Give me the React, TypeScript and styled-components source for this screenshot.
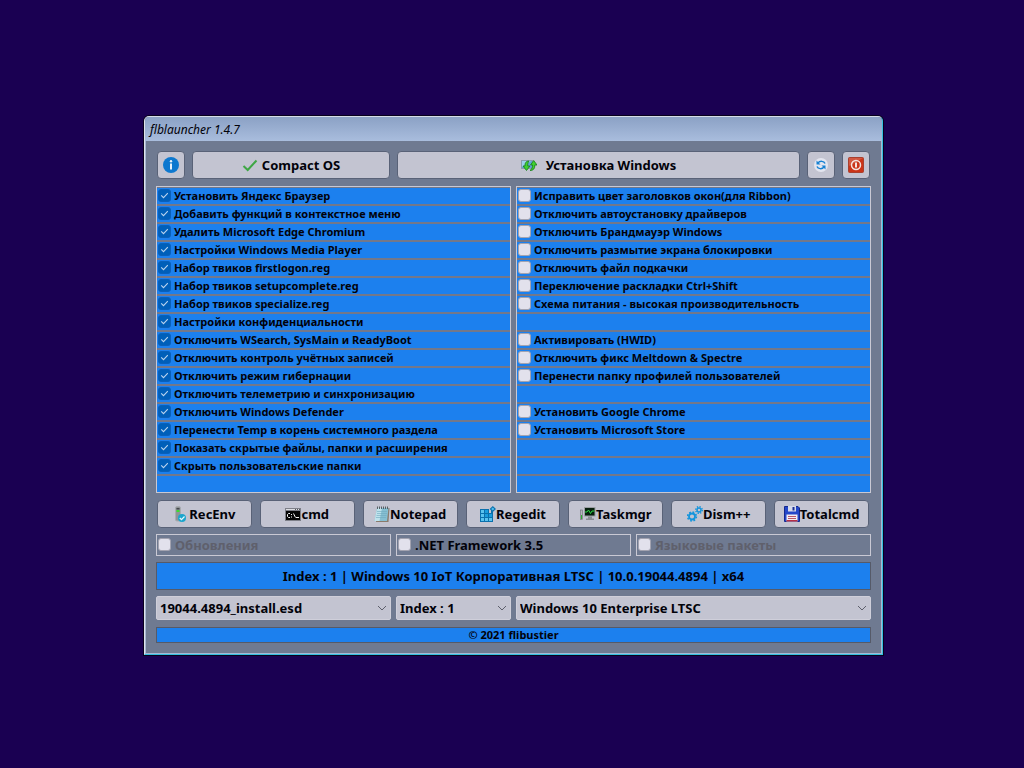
import React from "react";
import styled, { createGlobalStyle } from "styled-components";

const color = {
  desktop: "#1a0052",
  panel: "#6f7a91",
  face: "#c3c4d1",
  blue: "#1c80ee",
  edge: "#c9c9d4",
  dark: "#565a68",
  text: "#02020a",
};

const GlobalStyle = createGlobalStyle`
  *, *::before, *::after { box-sizing: border-box; }
  body {
    margin: 0;
    background: ${color.desktop};
    color: ${color.text};
    font: bold 13px/16px "Noto Sans", "DejaVu Sans", sans-serif;
  }
  button, select, input { font: inherit; color: inherit; margin: 0; }
`;

const Desktop = styled.div`
  display: flex;
  align-items: center;
  justify-content: center;
  min-height: 100vh;
  padding: 19px 16px 16px 19px;
`;

const Window = styled.main`
  width: 100%;
  max-width: 739px;
  background: ${color.panel};
  border: 1px solid;
  border-color: #d5dce6 #35bfe0 #35bfe0 #dfe3ea;
  border-radius: 5px 5px 0 0;
  box-shadow: 0 0 0 1px #08001e;
  overflow: hidden;
`;

const TitleBar = styled.header`
  height: 24px;
  padding: 0 5px;
  background: linear-gradient(#8ba1c5, #a9bddd);
`;

const Title = styled.h1`
  margin: 0;
  font: italic 400 12px/25px "Noto Sans", sans-serif;
`;

const Body = styled.div`
  display: flex;
  flex-direction: column;
  gap: 6px;
  padding: 10px;
  border: solid #a6b8d3;
  border-width: 0 1px 1px;
`;

const Toolbar = styled.div`
  display: grid;
  grid-template-columns: 28px 198fr 403fr 28px 28px;
  gap: 7px;
  padding: 0 1px 1px;
`;

const Launchers = styled.div`
  display: grid;
  grid-template-columns: repeat(7, 1fr);
  gap: 8px;
  padding: 1px 2px 0 1px;
`;

const Button = styled.button<{ $gap?: number }>`
  display: flex;
  align-items: center;
  justify-content: center;
  gap: ${(p) => p.$gap ?? 0}px;
  height: 28px;
  padding: 0;
  border: 1px solid #596277;
  border-radius: 4px;
  background: ${color.face};
  white-space: nowrap;
  svg { flex: none; }
`;

const Lists = styled.div`
  display: grid;
  grid-template-columns: 1fr 1fr;
  gap: 5px;
`;

const List = styled.ul`
  display: flex;
  flex-direction: column;
  gap: 2px;
  margin: 0;
  padding: 1px 0 0;
  list-style: none;
  border: 1px solid ${color.edge};
  background: #73788a;
`;

const Row = styled.li`
  height: 16px;
  background: ${color.blue};
`;

const Label = styled.label`
  display: flex;
  align-items: center;
  gap: 3px;
  height: 15px;
  padding-left: 1px;
  font-size: 11px;
  line-height: 15px;
  white-space: nowrap;
`;

const Check = styled.input`
  appearance: none;
  flex: none;
  width: 13px;
  height: 13px;
  border: 1px solid #a3a3b0;
  border-radius: 3px;
  background: #e2e1ec;
  &:checked {
    border-color: #0a60ba;
    background: #005fb9 url("data:image/svg+xml,%3Csvg xmlns='http://www.w3.org/2000/svg' viewBox='0 0 11 11'%3E%3Cpath d='M2.2 5.3l2.3 2.3 4.3-4.4' fill='none' stroke='%23b9d3ee' stroke-width='1.1'/%3E%3C/svg%3E") center / 11px 11px;
  }
`;

const Extras = styled.div`
  display: grid;
  grid-template-columns: repeat(3, 1fr);
  gap: 5px;
`;

const Extra = styled.label<{ $off?: boolean }>`
  display: flex;
  align-items: center;
  gap: 4px;
  height: 22px;
  padding: 0 0 1px 1px;
  border: 1px solid ${color.edge};
  color: ${(p) => (p.$off ? "#5f606c" : color.text)};
`;

const Banner = styled.div<{ $small?: boolean }>`
  display: flex;
  align-items: center;
  justify-content: center;
  height: ${(p) => (p.$small ? 16 : 28)}px;
  margin-top: ${(p) => (p.$small ? 1 : 0)}px;
  border: 1px solid ${color.dark};
  background: ${color.blue};
  font-size: ${(p) => (p.$small ? 11 : 13)}px;
`;

const Selects = styled.div`
  display: grid;
  grid-template-columns: 235fr 115fr 355fr;
  gap: 5px;
`;

const SelectBox = styled.div`
  position: relative;
  svg {
    position: absolute;
    right: 4px;
    top: 8px;
    pointer-events: none;
  }
`;

const Select = styled.select`
  display: block;
  appearance: none;
  width: 100%;
  height: 24px;
  padding: 0 20px 0 3px;
  border: 1px solid #cfcfda;
  border-radius: 2px;
  background: ${color.face};
`;

const Svg = ({ children }: { children: React.ReactNode }) => (
  <svg width="16" height="16" viewBox="0 0 16 16" aria-hidden="true">
    {children}
  </svg>
);

const InfoIcon = () => (
  <Svg>
    <circle cx="8" cy="8" r="8" fill="#0d78cf" />
    <rect x="7" y="6.5" width="2" height="6" fill="#e8f1fa" />
    <circle cx="8" cy="4.2" r="1.2" fill="#e8f1fa" />
  </Svg>
);

const TickIcon = () => (
  <Svg>
    <path d="M1.5 9l4.2 4L14.5 3.5" fill="none" stroke="#3fa745" strokeWidth="2" />
  </Svg>
);

const InstallIcon = () => (
  <Svg>
    <rect x="0.5" y="3.5" width="11" height="8" fill="#5fa6d6" stroke="#8b9cae" />
    <path d="M1 4h9L1 10z" fill="#9fd0ee" />
    <path d="M8 4C5 4 3.700 6 4 9H2l3.500 4.500L9 9H6.800C6.500 7 7 5.500 8 4z" fill="#3fd030" stroke="#177c1a" strokeWidth=".8" />
    <path d="M9 13.500c3.500 0 5-2 4.800-5.500H16l-3.300-4.500L9.500 8h2c.2 2.500-.7 4-2.500 5.500z" fill="#3fd030" stroke="#177c1a" strokeWidth=".8" />
  </Svg>
);

const RefreshIcon = () => (
  <Svg>
    <circle cx="8" cy="8" r="7" fill="#e3e5ef" />
    <path d="M12 6.500C11 4 7 3.500 5 6M4 9.500c1 2.500 5 3 7 .5" fill="none" stroke="#1681d2" strokeWidth="1.500" />
    <path d="M3.500 3.500v4h4zM12.500 12.500v-4h-4z" fill="#1681d2" />
  </Svg>
);

const PowerIcon = () => (
  <Svg>
    <rect x="0.500" y="0.500" width="15" height="15" rx="1" fill="#cb3418" stroke="#a8402f" />
    <path d="M1 1h14L1 9z" fill="#d9705c" opacity=".6" />
    <circle cx="8" cy="8" r="4.500" fill="none" stroke="#f3e2de" strokeWidth="1.500" />
    <rect x="7" y="5.500" width="2" height="5" fill="#f3e2de" />
  </Svg>
);

const RecEnvIcon = () => (
  <Svg>
    <rect x="2.500" y="0.500" width="5" height="14.500" rx="1.500" fill="#8f9497" stroke="#a8acb0" />
    <rect x="3.500" y="2" width="3" height="1.500" fill="#45494c" />
    <rect x="3.500" y="4" width="3" height="2" fill="#3ddc2f" />
    <circle cx="9" cy="12" r="4" fill="#1ba5cc" />
    <path d="M6.800 12l1.700 1.700 3-3.200" fill="none" stroke="#e8f8fc" strokeWidth="1.200" />
  </Svg>
);

const CmdIcon = () => (
  <Svg>
    <rect x="0" y="2" width="16" height="13" fill="#7d7f88" />
    <rect x="1" y="3" width="14" height="1" fill="#dcdde2" />
    <path d="M10 3.500h1M12 3.500h1M14 3.500h1" stroke="#55575f" />
    <rect x="1" y="5" width="14" height="9" fill="#050505" />
    <path d="M5 7.500H3.500L2.500 8.500v2l1 1H5M6.500 8v1M6.500 10.500v1M8.500 7.500l2 4M11 11.500h3" fill="none" stroke="#f2f2f2" />
  </Svg>
);

const NotepadIcon = () => (
  <Svg>
    <path d="M3 2h12.500l-1 14H2z" fill="#8a7b6c" />
    <path d="M3 2h11.500l-1.500 13H0.500z" fill="#86bfd2" />
    <path d="M3 2h5L5.500 15h-5z" fill="#bfe2ec" />
    <path d="M3 5.500h10M3 7.500h10M2.500 9.500h10M2 11.500h10" stroke="#6faabd" strokeWidth=".6" />
    <path d="M3.500 0.500v2.500M5.500 0.500v2.500M7.500 0.500v2.500M9.500 0.500v2.500M11.500 0.500v2.500M13.500 0.500v2.500" stroke="#4b5559" strokeWidth=".9" />
  </Svg>
);

const RegeditIcon = () => (
  <Svg>
    <rect x="0" y="3" width="13" height="13" fill="#0a70ad" />
    <path d="M1 4h3v3H1zM5 4h3v3H5zM1 8h3v3H1zM5 8h3v3H5zM9 8h3v3H9zM1 12h3v3H1zM5 12h3v3H5zM9 12h3v3H9z" fill="#5bc2ee" />
    <path d="M5 4h3v3H5zM5 8h3v3H5zM9 8h3v3H9z" fill="#1a9bdc" />
    <path d="M9 2h2v5H9z" fill="#c3c4d1" />
    <path d="M12.800 0l3.200 3-3.200 3-3.200-3z" fill="#0a70ad" />
    <path d="M12.800 1.500l1.600 1.500-1.600 1.500-1.600-1.500z" fill="#4fc0f0" />
  </Svg>
);

const TaskmgrIcon = () => (
  <Svg>
    <rect x="0.500" y="4" width="2" height="9.500" fill="#b4b6bc" stroke="#6c6f76" strokeWidth=".6" />
    <rect x="1" y="9" width="1" height="4" fill="#2fae34" />
    <rect x="4" y="1" width="11.500" height="9.500" fill="#9a9da3" />
    <rect x="5" y="2" width="9.500" height="7.500" fill="#07200e" />
    <path d="M5 6h2l1.500-2 2 3.500L12 5h2.500" fill="none" stroke="#2edb45" />
    <path d="M8 10.500h4v2h2V14H6v-1.500h2z" fill="#8b8e95" />
  </Svg>
);

const DismIcon = () => (
  <Svg>
    <g fill="none" stroke="#1494dc">
      <circle cx="5" cy="10.500" r="3" strokeWidth="1.800" />
      <circle cx="5" cy="10.500" r="4.400" strokeWidth="1.600" strokeDasharray="1.730 1.730" />
      <circle cx="12" cy="4" r="2" strokeWidth="1.500" />
      <circle cx="12" cy="4" r="3.300" strokeWidth="1.400" strokeDasharray="1.300 1.300" />
    </g>
  </Svg>
);

const FloppyIcon = () => (
  <Svg>
    <path d="M0.500 0.500h13.500l1.500 1.500v13.500H0.500z" fill="#2447c9" stroke="#15298d" />
    <rect x="4" y="0" width="8" height="5.500" fill="#d7dbea" />
    <rect x="8.500" y="1" width="2" height="3.500" fill="#1c2f91" />
    <rect x="2.500" y="8.500" width="11" height="7" fill="#f3eef2" />
    <path d="M4 10.500h8M4 12.500h8" stroke="#b8566a" />
    <rect x="2.500" y="14" width="11" height="1.500" fill="#b62f45" />
  </Svg>
);

const Chevron = () => (
  <svg width="10" height="8" viewBox="0 0 10 8" aria-hidden="true">
    <path d="M1 2l4 4 4-4" fill="none" stroke="#5d5f6b" />
  </svg>
);

const enabledTweaks = [
  "Установить Яндекс Браузер",
  "Добавить функций в контекстное меню",
  "Удалить Microsoft Edge Chromium",
  "Настройки Windows Media Player",
  "Набор твиков firstlogon.reg",
  "Набор твиков setupcomplete.reg",
  "Набор твиков specialize.reg",
  "Настройки конфиденциальности",
  "Отключить WSearch, SysMain и ReadyBoot",
  "Отключить контроль учётных записей",
  "Отключить режим гибернации",
  "Отключить телеметрию и синхронизацию",
  "Отключить Windows Defender",
  "Перенести Temp в корень системного раздела",
  "Показать скрытые файлы, папки и расширения",
  "Скрыть пользовательские папки",
  "",
];

const optionalTweaks = [
  "Исправить цвет заголовков окон(для Ribbon)",
  "Отключить автоустановку драйверов",
  "Отключить Брандмауэр Windows",
  "Отключить размытие экрана блокировки",
  "Отключить файл подкачки",
  "Переключение раскладки Ctrl+Shift",
  "Схема питания - высокая производительность",
  "",
  "Активировать (HWID)",
  "Отключить фикс Meltdown & Spectre",
  "Перенести папку профилей пользователей",
  "",
  "Установить Google Chrome",
  "Установить Microsoft Store",
  "",
  "",
  "",
];

const launchers = [
  { name: "RecEnv", Icon: RecEnvIcon },
  { name: "cmd", Icon: CmdIcon },
  { name: "Notepad", Icon: NotepadIcon },
  { name: "Regedit", Icon: RegeditIcon },
  { name: "Taskmgr", Icon: TaskmgrIcon },
  { name: "Dism++", Icon: DismIcon },
  { name: "Totalcmd", Icon: FloppyIcon },
];

const TweakList = ({ items, checked }: { items: string[]; checked: boolean }) => (
  <List>
    {items.map((text, i) => (
      <Row key={i}>
        {text && (
          <Label>
            <Check type="checkbox" defaultChecked={checked} />
            {text}
          </Label>
        )}
      </Row>
    ))}
  </List>
);

const DropDown = ({ label, value }: { label: string; value: string }) => (
  <SelectBox>
    <Select aria-label={label}>
      <option>{value}</option>
    </Select>
    <Chevron />
  </SelectBox>
);

export default function App() {
  return (
    <Desktop>
      <GlobalStyle />
      <Window>
        <TitleBar>
          <Title>flblauncher 1.4.7</Title>
        </TitleBar>
        <Body>
          <Toolbar>
            <Button aria-label="Info"><InfoIcon /></Button>
            <Button $gap={4}><TickIcon />Compact OS</Button>
            <Button $gap={9}><InstallIcon />Установка Windows</Button>
            <Button aria-label="Refresh"><RefreshIcon /></Button>
            <Button aria-label="Power"><PowerIcon /></Button>
          </Toolbar>
          <Lists>
            <TweakList items={enabledTweaks} checked />
            <TweakList items={optionalTweaks} checked={false} />
          </Lists>
          <Launchers>
            {launchers.map(({ name, Icon }) => (
              <Button key={name}><Icon />{name}</Button>
            ))}
          </Launchers>
          <Extras>
            <Extra $off><Check type="checkbox" disabled />Обновления</Extra>
            <Extra><Check type="checkbox" />.NET Framework 3.5</Extra>
            <Extra $off><Check type="checkbox" disabled />Языковые пакеты</Extra>
          </Extras>
          <Banner>Index : 1 | Windows 10 IoT Корпоративная LTSC | 10.0.19044.4894 | x64</Banner>
          <Selects>
            <DropDown label="Image file" value="19044.4894_install.esd" />
            <DropDown label="Index" value="Index : 1" />
            <DropDown label="Edition" value="Windows 10 Enterprise LTSC" />
          </Selects>
          <Banner as="footer" $small>© 2021 flibustier</Banner>
        </Body>
      </Window>
    </Desktop>
  );
}
